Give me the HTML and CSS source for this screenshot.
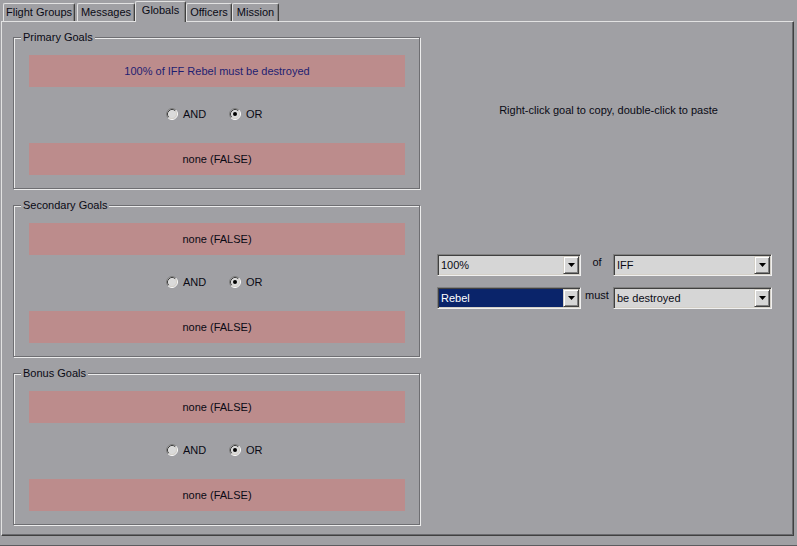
FILE: index.html
```html
<!DOCTYPE html>
<html>
<head>
<meta charset="utf-8">
<title>Globals</title>
<link rel="stylesheet" href="styles.css">
</head>
<body>
<div class="window">
  <div class="tabs">
    <div class="tab tab-fg">Flight Groups</div>
    <div class="tab tab-msg">Messages</div>
    <div class="tab tab-glob selected">Globals</div>
    <div class="tab tab-off">Officers</div>
    <div class="tab tab-mis">Mission</div>
  </div>
  <div class="panel">
    <div class="goals">
      <div class="group">
        <div class="group-title">Primary Goals</div>
        <div class="goal goal-set">100% of IFF Rebel must be destroyed</div>
        <div class="logic">
          <span class="radio opt-and"><svg width="12" height="12" viewBox="0 0 12 12"><circle cx="6" cy="6" r="5" fill="#dadada"/><path d="M2.11 9.89 A5.5 5.5 0 0 1 9.89 2.11" fill="none" stroke="#808080"/><path d="M9.89 2.11 A5.5 5.5 0 0 1 2.11 9.89" fill="none" stroke="#ffffff"/><path d="M2.82 9.18 A4.5 4.5 0 0 1 9.18 2.82" fill="none" stroke="#404040"/><path d="M9.18 2.82 A4.5 4.5 0 0 1 2.82 9.18" fill="none" stroke="#d4d0c8"/></svg>AND</span>
          <span class="radio"><svg width="12" height="12" viewBox="0 0 12 12"><circle cx="6" cy="6" r="5" fill="#dadada"/><path d="M2.11 9.89 A5.5 5.5 0 0 1 9.89 2.11" fill="none" stroke="#808080"/><path d="M9.89 2.11 A5.5 5.5 0 0 1 2.11 9.89" fill="none" stroke="#ffffff"/><path d="M2.82 9.18 A4.5 4.5 0 0 1 9.18 2.82" fill="none" stroke="#404040"/><path d="M9.18 2.82 A4.5 4.5 0 0 1 2.82 9.18" fill="none" stroke="#d4d0c8"/><circle cx="6" cy="6" r="2" fill="#000"/></svg>OR</span>
        </div>
        <div class="goal">none (FALSE)</div>
      </div>
      <div class="group">
        <div class="group-title">Secondary Goals</div>
        <div class="goal">none (FALSE)</div>
        <div class="logic">
          <span class="radio opt-and"><svg width="12" height="12" viewBox="0 0 12 12"><circle cx="6" cy="6" r="5" fill="#dadada"/><path d="M2.11 9.89 A5.5 5.5 0 0 1 9.89 2.11" fill="none" stroke="#808080"/><path d="M9.89 2.11 A5.5 5.5 0 0 1 2.11 9.89" fill="none" stroke="#ffffff"/><path d="M2.82 9.18 A4.5 4.5 0 0 1 9.18 2.82" fill="none" stroke="#404040"/><path d="M9.18 2.82 A4.5 4.5 0 0 1 2.82 9.18" fill="none" stroke="#d4d0c8"/></svg>AND</span>
          <span class="radio"><svg width="12" height="12" viewBox="0 0 12 12"><circle cx="6" cy="6" r="5" fill="#dadada"/><path d="M2.11 9.89 A5.5 5.5 0 0 1 9.89 2.11" fill="none" stroke="#808080"/><path d="M9.89 2.11 A5.5 5.5 0 0 1 2.11 9.89" fill="none" stroke="#ffffff"/><path d="M2.82 9.18 A4.5 4.5 0 0 1 9.18 2.82" fill="none" stroke="#404040"/><path d="M9.18 2.82 A4.5 4.5 0 0 1 2.82 9.18" fill="none" stroke="#d4d0c8"/><circle cx="6" cy="6" r="2" fill="#000"/></svg>OR</span>
        </div>
        <div class="goal">none (FALSE)</div>
      </div>
      <div class="group">
        <div class="group-title">Bonus Goals</div>
        <div class="goal">none (FALSE)</div>
        <div class="logic">
          <span class="radio opt-and"><svg width="12" height="12" viewBox="0 0 12 12"><circle cx="6" cy="6" r="5" fill="#dadada"/><path d="M2.11 9.89 A5.5 5.5 0 0 1 9.89 2.11" fill="none" stroke="#808080"/><path d="M9.89 2.11 A5.5 5.5 0 0 1 2.11 9.89" fill="none" stroke="#ffffff"/><path d="M2.82 9.18 A4.5 4.5 0 0 1 9.18 2.82" fill="none" stroke="#404040"/><path d="M9.18 2.82 A4.5 4.5 0 0 1 2.82 9.18" fill="none" stroke="#d4d0c8"/></svg>AND</span>
          <span class="radio"><svg width="12" height="12" viewBox="0 0 12 12"><circle cx="6" cy="6" r="5" fill="#dadada"/><path d="M2.11 9.89 A5.5 5.5 0 0 1 9.89 2.11" fill="none" stroke="#808080"/><path d="M9.89 2.11 A5.5 5.5 0 0 1 2.11 9.89" fill="none" stroke="#ffffff"/><path d="M2.82 9.18 A4.5 4.5 0 0 1 9.18 2.82" fill="none" stroke="#404040"/><path d="M9.18 2.82 A4.5 4.5 0 0 1 2.82 9.18" fill="none" stroke="#d4d0c8"/><circle cx="6" cy="6" r="2" fill="#000"/></svg>OR</span>
        </div>
        <div class="goal">none (FALSE)</div>
      </div>
    </div>
    <div class="editor">
      <p class="hint">Right-click goal to copy, double-click to paste</p>
      <div class="criteria">
        <div class="combo"><span class="field">100%</span><span class="drop"><svg width="7" height="4" viewBox="0 0 7 4"><path d="M0 0H7L3.5 4Z" fill="#000"/></svg></span></div>
        <span class="word">of</span>
        <div class="combo"><span class="field">IFF</span><span class="drop"><svg width="7" height="4" viewBox="0 0 7 4"><path d="M0 0H7L3.5 4Z" fill="#000"/></svg></span></div>
        <div class="combo"><span class="field highlighted">Rebel</span><span class="drop"><svg width="7" height="4" viewBox="0 0 7 4"><path d="M0 0H7L3.5 4Z" fill="#000"/></svg></span></div>
        <span class="word">must</span>
        <div class="combo"><span class="field">be destroyed</span><span class="drop"><svg width="7" height="4" viewBox="0 0 7 4"><path d="M0 0H7L3.5 4Z" fill="#000"/></svg></span></div>
      </div>
    </div>
  </div>
</div>
</body>
</html>
```

FILE: styles.css
```css
html, body {
  margin: 0;
  padding: 0;
  background: #a0a0a4;
}

.window {
  width: 797px;
  height: 546px;
  box-sizing: border-box;
  border-bottom: 1px solid #5c5c60;
  overflow: hidden;
  font-family: "Liberation Sans", Arial, sans-serif;
  font-size: 11px;
  color: #0a0a14;
}

/* ---------- tabs ---------- */
.tabs {
  display: flex;
  align-items: flex-end;
  height: 21px;
  padding-left: 3px;
}

.tab {
  box-sizing: border-box;
  height: 18px;
  line-height: 16px;
  text-align: center;
  border-top: 1px solid #e2e2e2;
  border-left: 1px solid #e2e2e2;
  border-right: 1px solid #404040;
  border-radius: 2px 2px 0 0;
  box-shadow: inset -1px 0 0 #808080;
  white-space: nowrap;
}

.tab-fg { width: 72px; margin-right: 2px; }
.tab-msg { width: 58px; }
.tab-glob { width: 51px; }
.tab-off { width: 46px; }
.tab-mis { width: 47px; }

.tab.selected {
  height: 21px;
  line-height: 16px;
  margin-bottom: -1px;
  background: #a0a0a4;
  position: relative;
  z-index: 1;
}

/* ---------- panel ---------- */
.panel {
  box-sizing: border-box;
  display: flex;
  width: 793px;
  height: 515px;
  margin-left: 1px;
  padding: 15px 0 0 11px;
  border-top: 1px solid #e2e2e2;
  border-left: 1px solid #e2e2e2;
  border-right: 1px solid #404040;
  border-bottom: 1px solid #404040;
  box-shadow: inset -1px -1px 0 #6a6a6e;
}

.goals {
  width: 407px;
  display: flex;
  flex-direction: column;
  gap: 16px;
}

.group {
  box-sizing: border-box;
  height: 152px;
  padding: 0 14px 0 15px;
  border: 1px solid #6e6e72;
  box-shadow: inset 1px 1px 0 #ececec, 1px 1px 0 #ececec;
}

.group-title {
  display: table;
  margin: -7px 0 0 -8px;
  padding: 0 2px;
  line-height: 12px;
  background: #a0a0a4;
}

.goal {
  height: 32px;
  line-height: 32px;
  text-align: center;
  background: #bc8c8c;
  margin-top: 12px;
}

.goal-set {
  color: #1e1e72;
}

.logic {
  display: flex;
  align-items: center;
  height: 12px;
  margin: 21px 0 23px;
  padding-left: 137px;
}

.radio {
  display: inline-flex;
  align-items: center;
  gap: 5px;
  line-height: 12px;
}

.opt-and {
  width: 63px;
}

/* ---------- editor ---------- */
.editor {
  flex: 1;
  padding: 0 13px 0 17px;
}

.hint {
  margin: 67px 0 0;
  line-height: 13px;
  text-align: center;
}

.criteria {
  display: grid;
  grid-template-columns: 144px 32px 159px;
  grid-auto-rows: 22px;
  row-gap: 11px;
  margin-top: 137px;
}

.word {
  text-align: center;
  line-height: 13px;
  padding-top: 2px;
}

.combo {
  box-sizing: border-box;
  display: flex;
  height: 22px;
  padding: 1px;
  border-top: 1px solid #808080;
  border-left: 1px solid #808080;
  border-right: 1px solid #f0f0f0;
  border-bottom: 1px solid #f0f0f0;
  box-shadow: inset 1px 1px 0 #404040, inset -1px -1px 0 #d4d0c8;
  background: #d6d6d6;
}

.field {
  flex: 1;
  line-height: 18px;
  padding-left: 2px;
  white-space: nowrap;
  overflow: hidden;
}

.field.highlighted {
  background: #0a246a;
  color: #fff;
}

.drop {
  box-sizing: border-box;
  width: 16px;
  height: 18px;
  display: flex;
  align-items: center;
  justify-content: center;
  background: #d6d6d6;
  border-top: 1px solid #d4d0c8;
  border-left: 1px solid #d4d0c8;
  border-right: 1px solid #404040;
  border-bottom: 1px solid #404040;
  box-shadow: inset 1px 1px 0 #fff, inset -1px -1px 0 #808080;
}
```
